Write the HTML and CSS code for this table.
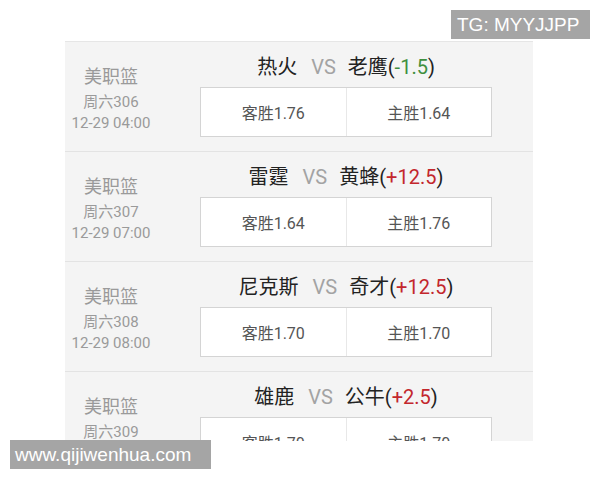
FILE: index.html
```html
<!DOCTYPE html>
<html lang="zh">
<head>
<meta charset="utf-8">
<link rel="stylesheet" href="styles.css">
</head>
<body>
<div class="page">
  <div class="list">
    <div class="card">
      <div class="meta">
        <div class="league">美职篮</div>
        <div class="num">周六306</div>
        <div class="time">12-29 04:00</div>
      </div>
      <div class="match">
        <div class="title"><span class="team">热火</span><span class="vs">VS</span><span class="team">老鹰(<span class="minus">-1.5</span>)</span></div>
        <div class="odds"><div class="cell">客胜1.76</div><div class="cell">主胜1.64</div></div>
      </div>
    </div>
    <div class="card">
      <div class="meta">
        <div class="league">美职篮</div>
        <div class="num">周六307</div>
        <div class="time">12-29 07:00</div>
      </div>
      <div class="match">
        <div class="title"><span class="team">雷霆</span><span class="vs">VS</span><span class="team">黄蜂(<span class="plus">+12.5</span>)</span></div>
        <div class="odds"><div class="cell">客胜1.64</div><div class="cell">主胜1.76</div></div>
      </div>
    </div>
    <div class="card">
      <div class="meta">
        <div class="league">美职篮</div>
        <div class="num">周六308</div>
        <div class="time">12-29 08:00</div>
      </div>
      <div class="match">
        <div class="title"><span class="team">尼克斯</span><span class="vs">VS</span><span class="team">奇才(<span class="plus">+12.5</span>)</span></div>
        <div class="odds"><div class="cell">客胜1.70</div><div class="cell">主胜1.70</div></div>
      </div>
    </div>
    <div class="card">
      <div class="meta">
        <div class="league">美职篮</div>
        <div class="num">周六309</div>
        <div class="time">12-29 09:00</div>
      </div>
      <div class="match">
        <div class="title"><span class="team">雄鹿</span><span class="vs">VS</span><span class="team">公牛(<span class="plus">+2.5</span>)</span></div>
        <div class="odds"><div class="cell">客胜1.70</div><div class="cell">主胜1.70</div></div>
      </div>
    </div>
  </div>
  <div class="wm wm-tg">TG: MYYJJPP</div>
  <div class="wm wm-site">www.qijiwenhua.com</div>
</div>
</body>
</html>
```
FILE: styles.css
```css
html, body {
  margin: 0;
  padding: 0;
  background: #ffffff;
}
body {
  font-family: Roboto, "Noto Sans CJK SC", sans-serif;
}
.page {
  position: relative;
  width: 600px;
  height: 480px;
  overflow: hidden;
}
.list {
  margin-left: 65px;
  margin-top: 41px;
  width: 468px;
  height: 399px;
  overflow: hidden;
  background: #f4f4f4;
  border-top: 1px solid #e6e6e6;
}
.card {
  display: flex;
  height: 109px;
  border-bottom: 1px solid #e3e3e3;
}
.meta {
  width: 92px;
  flex: none;
  display: flex;
  flex-direction: column;
  align-items: center;
  padding-top: 22px;
  color: #9a9a9a;
}
.league {
  font-size: 18px;
  line-height: 26px;
}
.num {
  font-size: 15px;
  line-height: 24px;
}
.time {
  font-size: 15px;
  line-height: 18px;
}
.match {
  margin-left: 43px;
  width: 292px;
  display: flex;
  flex-direction: column;
  align-items: center;
}
.title {
  margin-top: 10px;
  height: 30px;
  line-height: 30px;
  font-size: 20px;
  color: #222222;
  white-space: nowrap;
}
.vs {
  color: #a3a3a3;
  margin: 0 12px 0 14px;
}
.minus {
  color: #3f8f3f;
}
.plus {
  color: #c3272d;
}
.odds {
  margin-top: 5px;
  width: 290px;
  height: 48px;
  display: flex;
  background: #ffffff;
  border: 1px solid #d4d4d4;
}
.cell {
  flex: 1;
  display: flex;
  align-items: center;
  justify-content: center;
  font-size: 16px;
  color: #555555;
}
.cell + .cell {
  border-left: 1px solid #e8e8e8;
}
.wm {
  position: absolute;
  background: #a5a5a5;
  color: #ffffff;
  font-family: "Liberation Sans", Arial, sans-serif;
  font-size: 19px;
  display: flex;
  align-items: center;
  box-sizing: border-box;
}
.wm-tg {
  left: 451px;
  top: 10px;
  width: 139px;
  height: 29px;
  padding-left: 6px;
}
.wm-site {
  left: 10px;
  top: 440px;
  width: 201px;
  height: 29px;
  padding-left: 5px;
}
```
